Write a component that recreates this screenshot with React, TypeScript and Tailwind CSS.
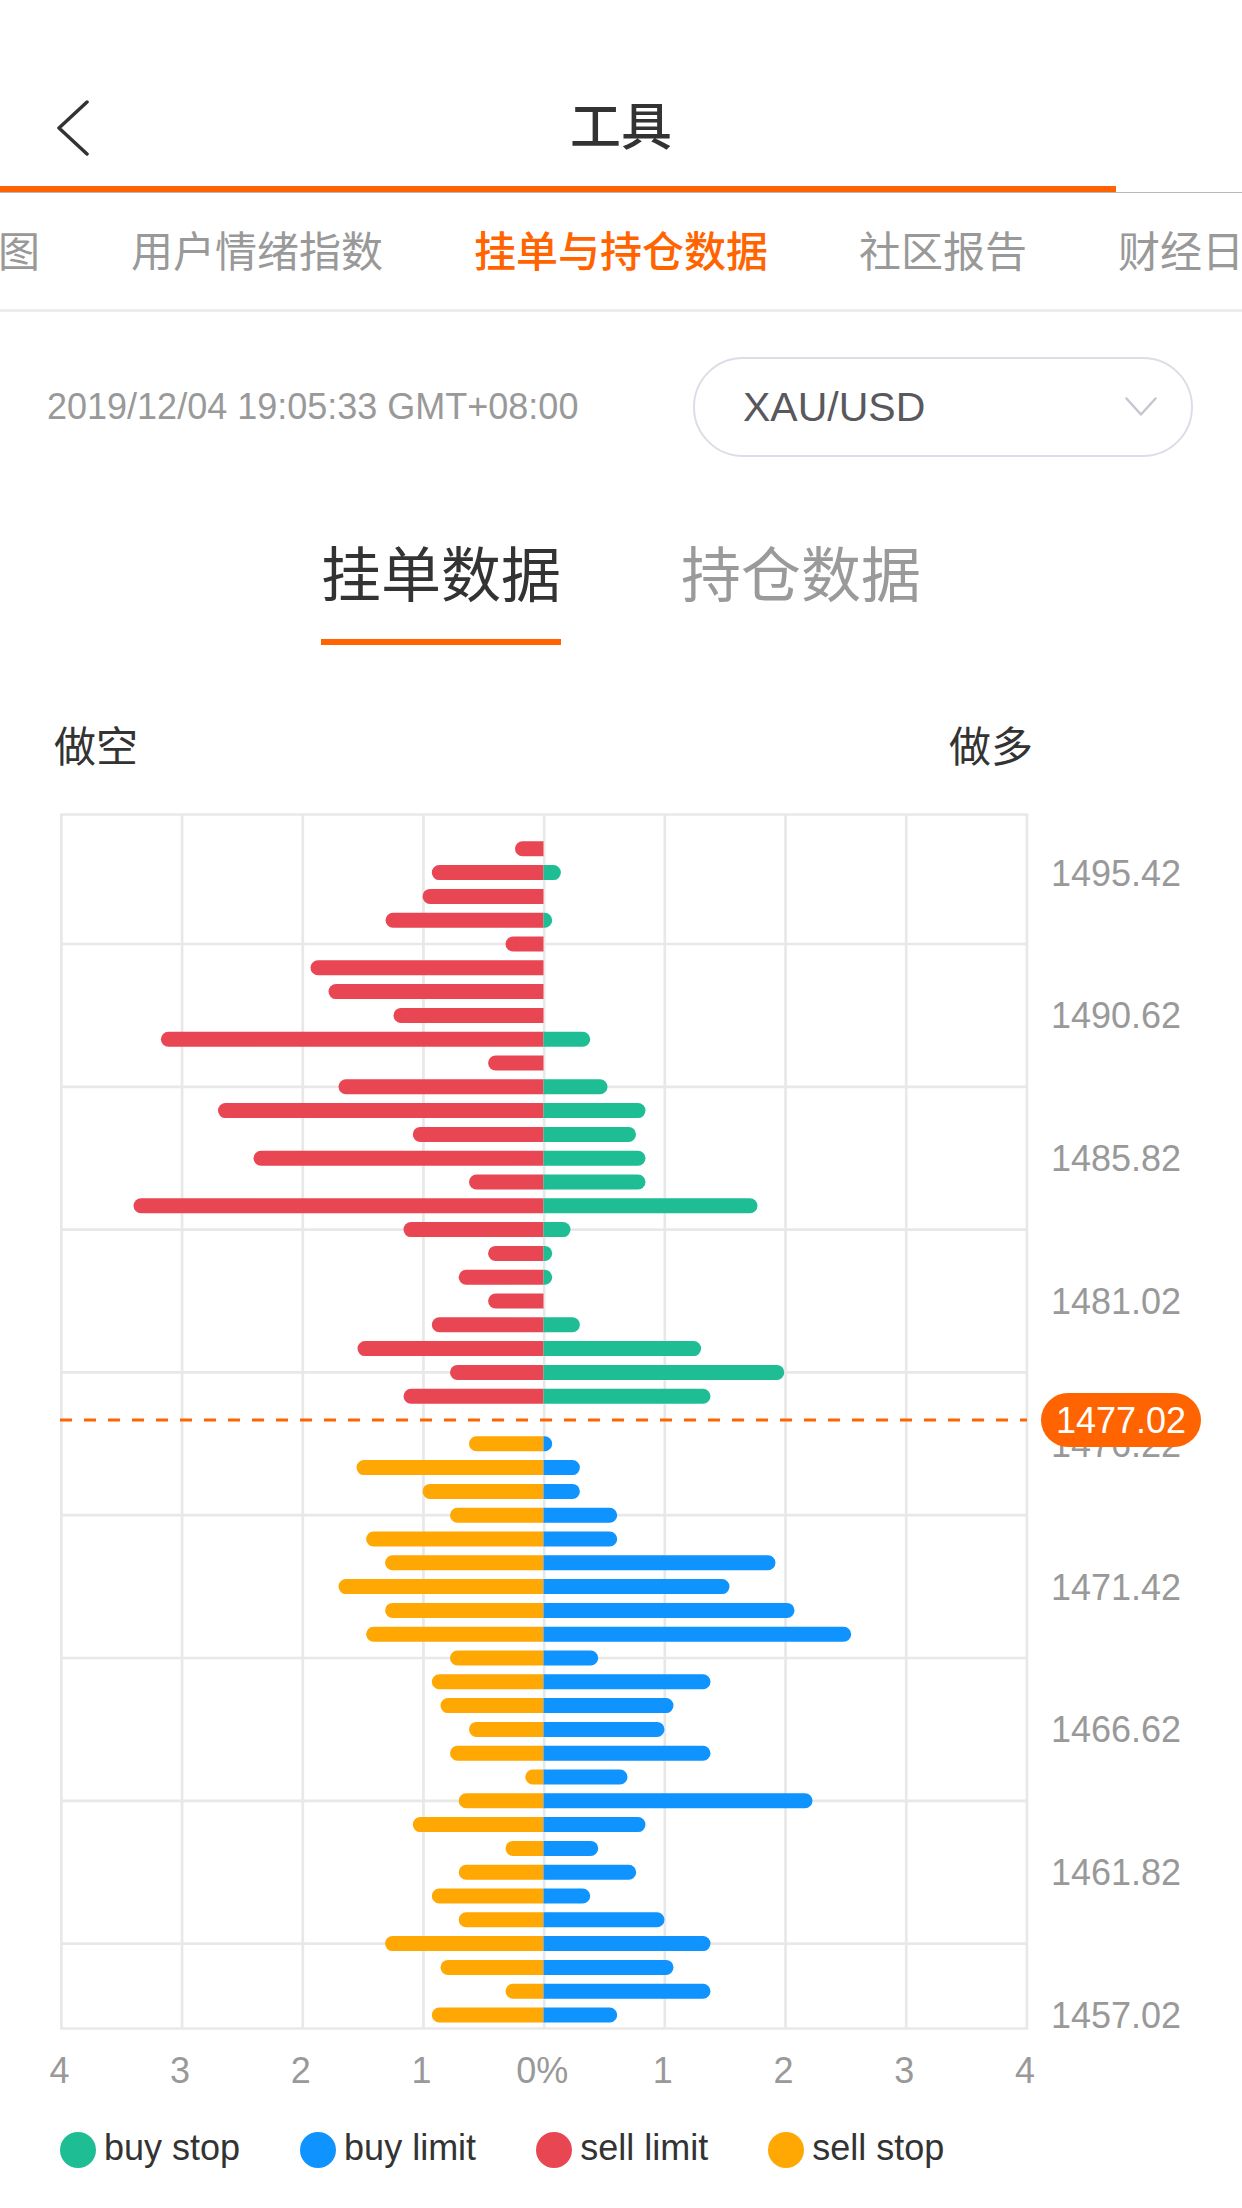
import React from "react";

const TOP: [number, number][] = [
  [28.5, 0], [111.7, 17.4], [121, 0], [158, 8.7], [38, 0], [233, 0], [215, 0], [150, 0],
  [382.6, 46.7], [55.4, 0], [205, 64], [325.5, 102], [130.7, 92.5], [290, 102], [74.5, 102],
  [410, 214], [140, 27], [55.4, 8.7], [84.8, 8.7], [55.4, 0], [111.7, 36.4], [186, 157.6],
  [93.5, 240.8], [140, 167],
];

const BOT: [number, number][] = [
  [74.5, 8.7], [187, 36.4], [121, 36.4], [93.5, 73.7], [177.4, 73.7], [158.4, 232], [205, 186],
  [158.4, 251], [177.4, 307.7], [93.5, 54.7], [111.7, 167], [103, 130], [74.5, 121], [93.5, 167],
  [18.2, 84], [84.8, 269], [130.7, 102], [38, 54.7], [84.8, 92.7], [111.7, 46.7], [84.8, 121],
  [158.4, 167], [103, 130], [38, 167], [111.7, 73.7],
];

const CX = 543.5;
const BH = 15;
const slotY = (s: number) => 848.8 + (s - 1) * 23.8;
const gridX = (k: number) => 61.4 + 120.69 * k;

const RED = "#e94654";
const GREEN = "#1ebd94";
const ORANGE = "#ffa702";
const BLUE = "#0e93ff";
const GRID = "#e8e8e8";
const BRAND = "#ff6400";

function leftBar(len: number, y: number, color: string, key: string) {
  if (len <= 0) return null;
  const r = Math.min(BH / 2, len);
  const t = y - BH / 2;
  const b = y + BH / 2;
  const x0 = CX - len + r;
  return (
    <path
      key={key}
      d={`M${CX} ${t} H${x0} A${r} ${BH / 2} 0 0 0 ${x0} ${b} H${CX} Z`}
      fill={color}
    />
  );
}

function rightBar(len: number, y: number, color: string, key: string) {
  if (len <= 0) return null;
  const r = Math.min(BH / 2, len);
  const t = y - BH / 2;
  const b = y + BH / 2;
  const x1 = CX + len - r;
  return (
    <path
      key={key}
      d={`M${CX} ${t} H${x1} A${r} ${BH / 2} 0 0 1 ${x1} ${b} H${CX} Z`}
      fill={color}
    />
  );
}

const PRICE_LABELS: [number, string][] = [
  [2, "1495.42"], [8, "1490.62"], [14, "1485.82"], [20, "1481.02"], [26, "1476.22"],
  [32, "1471.42"], [38, "1466.62"], [44, "1461.82"], [50, "1457.02"],
];

const X_LABELS = ["4", "3", "2", "1", "0%", "1", "2", "3", "4"];

function Chart() {
  const top = 814.5;
  const bottom = 2028.5;
  const left = gridX(0);
  const right = gridX(8);
  const hLines = [5, 11, 17, 23, 29, 35, 41, 47];
  const SW = 2.7;
  return (
    <svg width={1242} height={1310} viewBox="0 790 1242 1310" className="block">
      {/* vertical grid */}
      {Array.from({ length: 9 }).map((_, k) => (
        <line key={`v${k}`} x1={gridX(k)} x2={gridX(k)} y1={top} y2={bottom} stroke={GRID} strokeWidth={SW} />
      ))}
      {/* horizontal grid */}
      <line x1={left - SW / 2} x2={right + SW / 2} y1={top} y2={top} stroke={GRID} strokeWidth={SW} />
      <line x1={left - SW / 2} x2={right + SW / 2} y1={bottom} y2={bottom} stroke={GRID} strokeWidth={SW} />
      {hLines.map((s) => (
        <line key={`h${s}`} x1={left} x2={right} y1={slotY(s)} y2={slotY(s)} stroke={GRID} strokeWidth={SW} />
      ))}
      {/* bars */}
      {TOP.map(([l, r], i) => {
        const y = slotY(i + 1);
        return (
          <g key={`t${i}`}>
            {leftBar(l, y, RED, `tl${i}`)}
            {rightBar(r, y, GREEN, `tr${i}`)}
          </g>
        );
      })}
      {BOT.map(([l, r], i) => {
        const y = slotY(i + 26);
        return (
          <g key={`b${i}`}>
            {leftBar(l, y, ORANGE, `bl${i}`)}
            {rightBar(r, y, BLUE, `br${i}`)}
          </g>
        );
      })}
      {/* current price line */}
      <line
        x1={60}
        x2={right}
        y1={slotY(25)}
        y2={slotY(25)}
        stroke={BRAND}
        strokeWidth={3}
        strokeDasharray="12 12"
      />
      {/* price labels */}
      {PRICE_LABELS.map(([s, t]) => (
        <text key={t} x={1051} y={slotY(s) + 12.9} fontSize={36} fill="#999999">
          {t}
        </text>
      ))}
      {/* current price badge */}
      <rect x={1041} y={slotY(25) - 27} width={160} height={54} rx={27} fill={BRAND} />
      <text x={1121} y={slotY(25) + 12.9} fontSize={36} fill="#ffffff" textAnchor="middle">
        1477.02
      </text>
      {/* x axis labels */}
      {X_LABELS.map((t, k) => (
        <text key={`x${k}`} x={gridX(k) - 2} y={2083} fontSize={36} fill="#999999" textAnchor="middle">
          {t}
        </text>
      ))}
    </svg>
  );
}

function LegendItem({ color, label }: { color: string; label: string }) {
  return (
    <div className="flex items-center gap-[8px]">
      <span className="block w-[36px] h-[36px] rounded-full" style={{ backgroundColor: color }} />
      <span className="text-[36px] leading-[36px] text-[#333333] mb-[4px]">{label}</span>
    </div>
  );
}

export default function App() {
  return (
    <div className="w-[1242px] min-h-[2208px] bg-white overflow-hidden font-['Liberation_Sans','Noto_Sans_CJK_SC',sans-serif]">
      {/* Header */}
      <div className="h-[186px] pt-[64px]">
        <div className="grid grid-cols-[1fr_auto_1fr] items-center h-[122px]">
          <div className="flex items-center">
            <svg width={32} height={56} viewBox="0 0 32 56" className="ml-[57px] mt-[6px]">
              <path d="M30 2 L2 28 L30 54" fill="none" stroke="#333333" strokeWidth={3.5} strokeLinecap="round" strokeLinejoin="round" />
            </svg>
          </div>
          <div className="text-[51px] leading-[51px] text-[#333333] font-medium mt-[4px]">工具</div>
          <div />
        </div>
      </div>
      <div className="h-[6px] w-[1116px] bg-[#ff6400]" />
      <div className="h-[1px] bg-[#b8b8b8]" />

      {/* Category tabs */}
      <div className="h-[116px] pt-[4px] flex items-center gap-[91px] ml-[-2px] whitespace-nowrap overflow-hidden text-[42px] leading-[42px] text-[#999999]">
        <span>图</span>
        <span>用户情绪指数</span>
        <span className="text-[#ff6400] font-medium">挂单与持仓数据</span>
        <span>社区报告</span>
        <span>财经日历</span>
      </div>
      <div className="h-[3px] bg-[#ededf1]" />

      {/* Date + symbol */}
      <div className="mt-[45px] h-[100px] flex items-center justify-between pl-[47px] pr-[49px]">
        <span className="text-[36px] leading-[36px] text-[#999999]">2019/12/04 19:05:33 GMT+08:00</span>
        <div className="w-[500px] h-[100px] rounded-full border-2 border-[#dcdee7] flex items-center justify-between pl-[48px] pr-[34px]">
          <span className="text-[41px] leading-[41px] text-[#58585d]">XAU/USD</span>
          <svg width={32} height={20} viewBox="0 0 32 20">
            <path d="M1.5 1.5 L16 17.5 L30.5 1.5" fill="none" stroke="#c5c7d0" strokeWidth={2.5} strokeLinecap="round" strokeLinejoin="round" />
          </svg>
        </div>
      </div>

      {/* Sub tabs */}
      <div className="mt-[90px] flex justify-center gap-[120px]">
        <div className="flex flex-col items-center">
          <span className="text-[60px] leading-[60px] text-[#333333]">挂单数据</span>
          <div className="mt-[32px] h-[6px] w-[240px] bg-[#ff6400]" />
        </div>
        <div className="flex flex-col items-center">
          <span className="text-[60px] leading-[60px] text-[#9a9a9a]">持仓数据</span>
          <div className="mt-[32px] h-[6px] w-[240px]" />
        </div>
      </div>

      {/* Short / Long labels */}
      <div className="mt-[82px] flex justify-between pl-[54px] pr-[209px] text-[42px] leading-[42px] text-[#333333]">
        <span>做空</span>
        <span>做多</span>
      </div>

      {/* Chart */}
      <div className="mt-[21px]">
        <Chart />
      </div>

      {/* Legend */}
      <div className="mt-[30px] flex items-center gap-[60px] pl-[60px]">
        <LegendItem color={GREEN} label="buy stop" />
        <LegendItem color={BLUE} label="buy limit" />
        <LegendItem color={RED} label="sell limit" />
        <LegendItem color={ORANGE} label="sell stop" />
      </div>
    </div>
  );
}
